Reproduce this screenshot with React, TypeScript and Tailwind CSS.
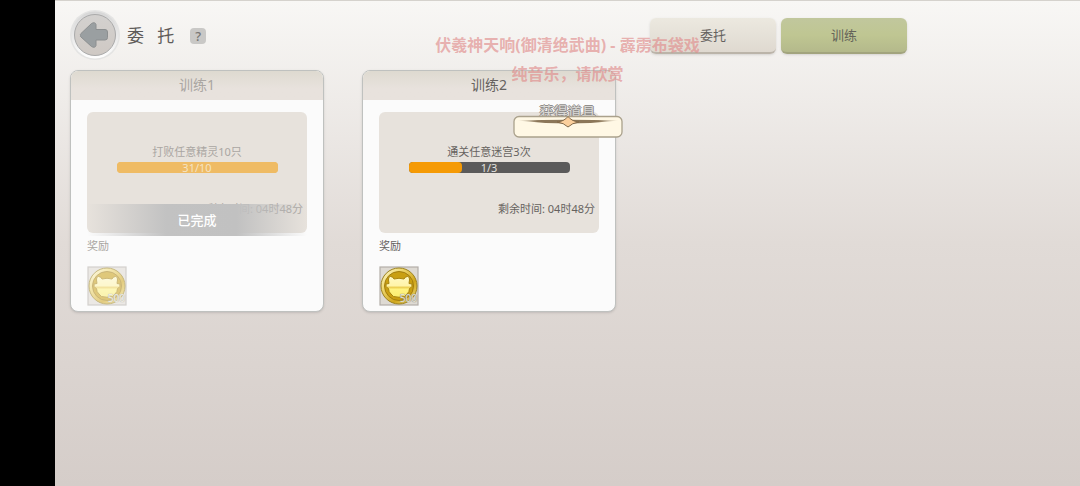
import React from "react";

type Task = {
  title: string;
  goal: string;
  current: number;
  total: number;
  timeLeft: string;
  reward: number;
  done: boolean;
};

const tasks: Task[] = [
  { title: "训练1", goal: "打败任意精灵10只", current: 31, total: 10, timeLeft: "04时48分", reward: 500, done: true },
  { title: "训练2", goal: "通关任意迷宫3次", current: 1, total: 3, timeLeft: "04时48分", reward: 500, done: false },
];

function BackIcon() {
  return (
    <svg viewBox="0 0 52 52" className="size-[52px]" aria-hidden="true">
      <defs>
        <linearGradient id="ring" x1="0" y1="0" x2="0" y2="1">
          <stop offset="0" stopColor="#d6d6d6" />
          <stop offset=".6" stopColor="#ececec" />
          <stop offset="1" stopColor="#ffffff" />
        </linearGradient>
        <linearGradient id="disc" x1="0" y1="0" x2="0" y2="1">
          <stop offset="0" stopColor="#d3d1cf" />
          <stop offset="1" stopColor="#cfc9c4" />
        </linearGradient>
      </defs>
      <circle cx="26" cy="25" r="25" fill="#e4e4e3" />
      <circle cx="26" cy="25" r="23.5" fill="url(#ring)" />
      <circle cx="26" cy="25" r="20.5" fill="url(#disc)" stroke="#aaaaaa" strokeWidth="1" />
      <path
        d="M11.500 25.500Q11 24.500 12 23.500L22.500 13.500Q26 11.500 27 14.500V19.500H36Q38.500 19.500 38.500 22V27.500Q38.500 30 36 30H27V35.500Q26 38.500 22.500 36.500L12 27Q11 26.500 11.500 25.500Z"
        fill="#9a9fa1"
        stroke="#8c8f90"
        strokeWidth="1"
        strokeLinejoin="round"
      />
    </svg>
  );
}

function Coin() {
  return (
    <svg viewBox="0 0 40 40" className="size-10" aria-hidden="true">
      <defs>
        <linearGradient id="rim" x1="0" y1="0" x2="1" y2="1">
          <stop offset="0" stopColor="#fffce0" />
          <stop offset=".3" stopColor="#f0da74" />
          <stop offset=".65" stopColor="#cfa51a" />
          <stop offset="1" stopColor="#f6e88c" />
        </linearGradient>
        <linearGradient id="face" x1="0" y1="0" x2="0" y2="1">
          <stop offset="0" stopColor="#fff9c4" />
          <stop offset=".45" stopColor="#fff4a8" />
          <stop offset=".52" stopColor="#ebcd52" />
          <stop offset=".62" stopColor="#fff380" />
          <stop offset="1" stopColor="#f9ee70" />
        </linearGradient>
      </defs>
      <rect x="1" y="1" width="38" height="38" fill="#dedad3" stroke="#b3aea8" strokeWidth="1.200" />
      <circle cx="20" cy="20" r="18" fill="url(#rim)" stroke="#9c821f" strokeWidth="1" />
      <circle cx="20" cy="20" r="14.500" fill="#c99f12" stroke="#a27d10" strokeWidth="1" />
      <path
        d="M9.500 14Q9 10.500 11.500 10.500T15 13Q20 11.500 25 13 26 10.500 28.500 10.500T30.500 14L30 17.500 33 18Q33.500 21 31.500 22L30.500 22.500Q30.500 26 28 28L25.500 30.500Q20 32 14.500 30.500L12 28Q9.500 26 9.500 22.500L8.500 22Q6.500 21 7 18L10 17.500Z"
        fill="url(#face)"
        stroke="#a8830f"
        strokeWidth="1"
        strokeLinejoin="round"
      />
    </svg>
  );
}

function TaskCard({ task }: { task: Task }) {
  const percent = Math.min(100, (task.current / task.total) * 100);
  return (
    <article className="w-[254px] rounded-lg border border-[#bfc1bf] bg-[#fbfbfb] shadow-sm">
      <h2
        className={`h-[29px] rounded-t-[7px] bg-linear-to-b from-[#dedad0] to-[#e8e2dd] to-60% text-center text-sm leading-7 ${
          task.done ? "text-[#aaa6a2]" : "text-[#66625f]"
        }`}
      >
        {task.title}
      </h2>
      <div className="px-4 pt-3 pb-[5px]">
        <div className="relative">
          <div className={`h-[121px] rounded-md bg-[#e7e2dc] pt-8 text-[11px] leading-4 ${task.done ? "text-[#aaa6a2]" : "text-[#66625f]"}`}>
            <p className="text-center">{task.goal}</p>
            <div
              role="progressbar"
              aria-label={task.goal}
              aria-valuemin={0}
              aria-valuemax={task.total}
              aria-valuenow={Math.min(task.current, task.total)}
              className={`relative mx-auto mt-0.5 h-[11px] w-[161px] rounded ${
                task.done ? "bg-[#efbb64]" : "bg-[#5b5a5a]"
              }`}
            >
              <div
                className={`h-full rounded ${task.done ? "bg-[#efbb64]" : "bg-[#f59a05]"}`}
                style={{ width: `${percent}%` }}
              />
              <span className={`absolute inset-x-0 -top-0.5 text-center leading-4 ${task.done ? "text-[#f6e3c2]" : "text-[#e2e0de]"}`}>
                {task.current}/{task.total}
              </span>
            </div>
            <p className="mt-7 pr-1 text-right">剩余时间: {task.timeLeft}</p>
          </div>
          {task.done && (
            <div className="absolute inset-x-0 top-[92px] h-8 bg-[linear-gradient(90deg,transparent,#c2c2c2_36%,#c1c1c1_68%,transparent)] text-center text-[13px] leading-8 font-medium text-white">
              已完成
            </div>
          )}
        </div>
        <h3 className={`mt-[5px] text-[11px] leading-4 ${task.done ? "text-[#aaa6a2]" : "text-[#66625f]"}`}>奖励</h3>
        <div className={`relative mt-3 size-10 ${task.done ? "opacity-55" : ""}`}>
          <Coin />
          <span className="absolute right-0.5 bottom-0 text-[10px] leading-4 text-[#e3e0d2] [text-shadow:0_0_1px_#8d8878,0_0_1px_#8d8878]">
            {task.reward}
          </span>
        </div>
      </div>
    </article>
  );
}

function ItemToast() {
  return (
    <div className="pointer-events-none absolute inset-x-0 top-[103px] flex flex-col items-center">
      <p className="h-[11px] text-sm leading-4 text-[#dad9d6] [text-shadow:1px_0_0_#918e8b,-1px_0_0_#918e8b,0_1px_0_#918e8b,0_-1px_0_#918e8b]">
        获得道具
      </p>
      <svg viewBox="0 0 110 24" className="relative h-6 w-[110px]" aria-hidden="true">
        <defs>
          <linearGradient id="stripe">
            <stop offset="0" stopColor="#8b7658" stopOpacity="0" />
            <stop offset=".2" stopColor="#8b7658" />
            <stop offset=".8" stopColor="#8b7658" />
            <stop offset="1" stopColor="#8b7658" stopOpacity="0" />
          </linearGradient>
        </defs>
        <rect x="1" y="1.500" width="108" height="20.500" rx="5" fill="#fff8e5" stroke="#aaa18c" strokeWidth="1.300" />
        <path d="M4 5.500Q55 4 106 5.500 55 11.500 4 5.500Z" fill="url(#stripe)" />
        <path d="M44 7Q51 6.500 55 1.500 59 6.500 66 7 59 8 55 12 51 8 44 7Z" fill="#fbcf9c" stroke="#806747" strokeWidth="1" />
      </svg>
    </div>
  );
}

export default function App() {
  return (
    <div className="flex min-h-screen bg-black font-['Noto_Sans','Noto_Sans_CJK_SC',sans-serif]">
      <main className="relative ml-[55px] flex-1 border-t border-[#d5d2cd] bg-linear-to-b from-[#f8f7f5] via-[#e1dbd7] via-50% to-[#d5cdc9]">
        <header className="flex h-[69px] items-center pl-[14px] pr-[173px]">
          <button type="button" aria-label="返回" className="rounded-full">
            <BackIcon />
          </button>
          <h1 className="ml-1.5 text-[17px] leading-6 text-[#5f5c5a]">委&nbsp;&nbsp; 托</h1>
          <button
            type="button"
            aria-label="帮助"
            className="ml-4 size-4 rounded bg-[#c9c8c6] text-center text-[13px] leading-4 font-medium text-[#777573]"
          >
            ?
          </button>
          <nav className="ml-auto flex gap-[5px]">
            <button
              type="button"
              className="h-9 w-[126px] rounded-md border-b-2 border-[#bbb4a9] bg-linear-to-b from-[#ece9e0] to-[#dfd9d0] pt-0.5 text-[13px] text-[#65625f] shadow-sm"
            >
              委托
            </button>
            <button
              type="button"
              aria-current="page"
              className="h-9 w-[126px] rounded-md border-b-2 border-[#a2a47e] bg-linear-to-b from-[#c1c79d] via-[#bfc692] to-[#b4b98b] pt-0.5 text-[13px] text-[#65645a] shadow-sm"
            >
              训练
            </button>
          </nav>
        </header>
        <section className="flex flex-wrap gap-[38px] pl-[15px]">
          {tasks.map((task) => (
            <TaskCard key={task.title} task={task} />
          ))}
        </section>
        <div className="pointer-events-none absolute inset-x-0 top-[30px] text-center text-base leading-[29px] font-bold text-[#e08a8a]/65">
          <p>伏羲神天响(御清绝武曲) - 霹雳布袋戏</p>
          <p>纯音乐，请欣赏</p>
        </div>
        <ItemToast />
      </main>
    </div>
  );
}
